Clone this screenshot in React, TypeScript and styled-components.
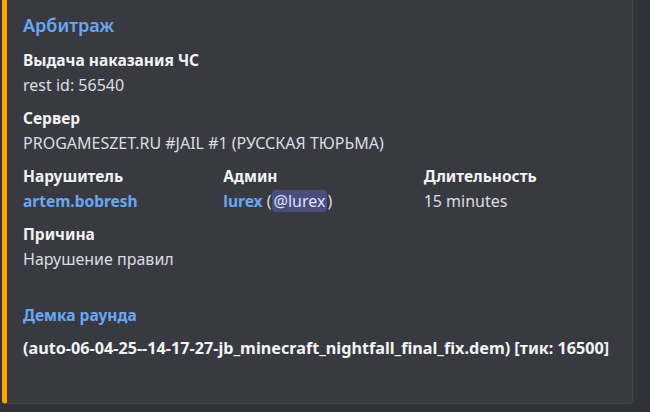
import React from "react";
import styled, { createGlobalStyle } from "styled-components";

const Global = createGlobalStyle`
  html, body { margin: 0; padding: 0; background: #313238; }
  body { font-family: "Noto Sans", "Open Sans", sans-serif; overflow: hidden; }
`;

const Page = styled.div`
  width: 650px;
  height: 412px;
  background: #313238;
  padding-left: 2px;
  box-sizing: border-box;
  overflow: hidden;
`;

const Embed = styled.article`
  width: 631px;
  margin-top: -10px;
  box-sizing: border-box;
  background: #393a41;
  border: 1px solid #44454c;
  border-left: 5px solid #ffa500;
  border-radius: 4px;
  padding: 16px 16px 44px 16px;
  display: flex;
  flex-direction: column;
`;

const Title = styled.div`
  font-size: 18px;
  line-height: 24px;
  font-weight: 600;
  color: #68a8f3;
  margin-top: 6px;
`;

const Fields = styled.div`
  display: grid;
  grid-template-columns: repeat(3, 1fr);
  column-gap: 8px;
  row-gap: 11px;
  margin-top: 12px;
`;

const Field = styled.div<{ $full?: boolean }>`
  grid-column: ${(p) => (p.$full ? "1 / -1" : "auto")};
  display: flex;
  flex-direction: column;
`;

const Name = styled.div<{ $link?: boolean }>`
  font-size: 15.5px;
  line-height: 22px;
  font-weight: 700;
  color: ${(p) => (p.$link ? "#68a8f3" : "#f2f3f5")};
`;

const Value = styled.div<{ $bold?: boolean }>`
  font-size: 16px;
  line-height: 22px;
  margin-top: 3px;
  color: ${(p) => (p.$bold ? "#f2f3f5" : "#dbdee1")};
  font-weight: ${(p) => (p.$bold ? 700 : 400)};
  white-space: nowrap;
`;

const Link = styled.span`
  color: #68a8f3;
  font-weight: 700;
  font-size: 15.5px;
`;

const Mention = styled.span`
  background: #4a4e7e;
  color: #dfe1fd;
  border-radius: 4px;
  padding: 0 2px;
`;

const Demo = styled.div`
  margin-top: 34px;
  display: flex;
  flex-direction: column;
`;

const DemoValue = styled(Value)`
  margin-top: 11px;
  font-size: 16.2px;
`;

export default function App() {
  return (
    <Page>
      <Global />
      <Embed>
        <Title>Арбитраж</Title>
        <Fields>
          <Field $full>
            <Name>Выдача наказания ЧС</Name>
            <Value>rest id: 56540</Value>
          </Field>
          <Field $full>
            <Name>Сервер</Name>
            <Value>PROGAMESZET.RU #JAIL #1 (РУССКАЯ ТЮРЬМА)</Value>
          </Field>
          <Field>
            <Name>Нарушитель</Name>
            <Value>
              <Link>artem.bobresh</Link>
            </Value>
          </Field>
          <Field>
            <Name>Админ</Name>
            <Value>
              <Link>lurex</Link> (<Mention>@lurex</Mention>)
            </Value>
          </Field>
          <Field>
            <Name>Длительность</Name>
            <Value>15 minutes</Value>
          </Field>
          <Field $full>
            <Name>Причина</Name>
            <Value>Нарушение правил</Value>
          </Field>
        </Fields>
        <Demo>
          <Name $link>Демка раунда</Name>
          <DemoValue $bold>
            (auto-06-04-25--14-17-27-jb_minecraft_nightfall_final_fix.dem) [тик: 16500]
          </DemoValue>
        </Demo>
      </Embed>
    </Page>
  );
}
